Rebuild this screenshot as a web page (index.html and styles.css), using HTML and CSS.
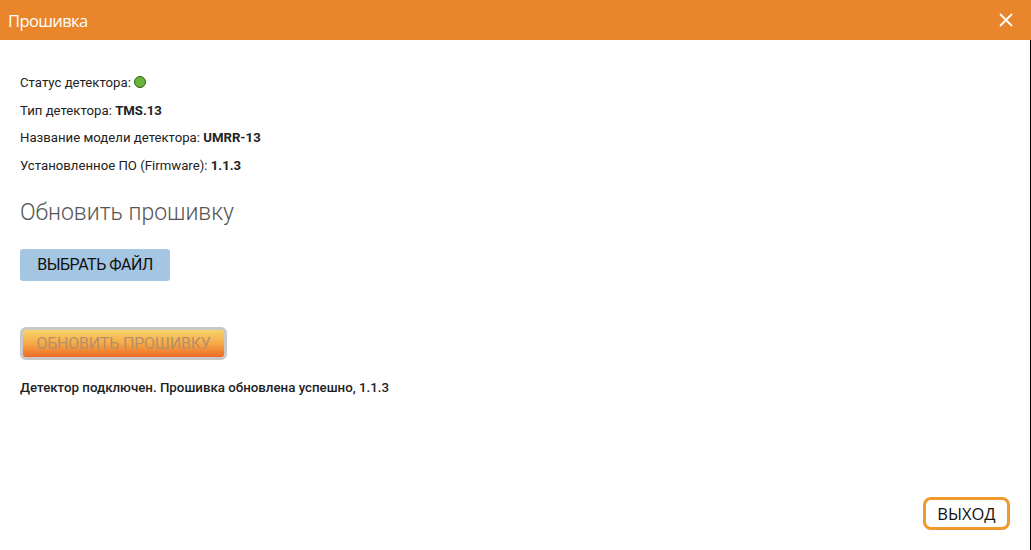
FILE: index.html
```html
<!DOCTYPE html>
<html lang="ru">
<head>
    <meta charset="UTF-8">
    <meta name="viewport" content="width=device-width, initial-scale=1.0">
    <title>Прошивка</title>
    <link rel="stylesheet" href="styles.css">
</head>
<body>
    <div class="dialog">
        <!-- Заголовок окна -->
        <div class="dialog-header">
            <span class="dialog-title">Прошивка</span>
            <button class="close-btn" title="Закрыть">
                <svg width="16" height="16" viewBox="0 0 16 16">
                    <path d="M2 2 L14 14 M14 2 L2 14" stroke="#fff" stroke-width="1.8" fill="none"/>
                </svg>
            </button>
        </div>

        <div class="dialog-body">
            <div class="info">
                <p>Статус детектора: <span class="status-dot"></span></p>
                <p>Тип детектора: <b>TMS.13</b></p>
                <p>Название модели детектора: <b>UMRR-13</b></p>
                <p>Установленное ПО (Firmware): <b>1.1.3</b></p>
            </div>

            <h2>Обновить прошивку</h2>

            <button class="btn-file">ВЫБРАТЬ ФАЙЛ</button>

            <button class="btn-update" disabled>ОБНОВИТЬ ПРОШИВКУ</button>

            <p class="result">Детектор подключен. Прошивка обновлена успешно, 1.1.3</p>

            <div class="footer">
                <button class="btn-exit">ВЫХОД</button>
            </div>
        </div>
    </div>
</body>
</html>
```

FILE: styles.css
```css
html, body {
    margin: 0;
    padding: 0;
    height: 100%;
    background-color: #fff;
}

body {
    font-family: 'Roboto', sans-serif;
    color: #222;
}

.dialog {
    display: flex;
    flex-direction: column;
    height: 550px;
}

.dialog-header {
    height: 40px;
    background-color: #e9852a;
    display: flex;
    align-items: center;
    justify-content: space-between;
    padding: 0 0 0 8px;
}

.dialog-title {
    font-family: 'Open Sans', sans-serif;
    font-size: 16.5px;
    color: #fff;
    letter-spacing: -0.6px;
}

.close-btn {
    background: none;
    border: none;
    padding: 0;
    margin-right: 17px;
    width: 16px;
    height: 16px;
    cursor: pointer;
    display: flex;
}

.dialog-body {
    flex: 1;
    display: flex;
    flex-direction: column;
    align-items: flex-start;
    padding: 29px 0 0 20px;
    border-right: 1px solid #000;
}

.info p {
    margin: 0;
    font-size: 13.2px;
    line-height: 27.7px;
    color: #222;
}

.info b {
    font-weight: 700;
}

.status-dot {
    display: inline-block;
    width: 10px;
    height: 10px;
    border-radius: 50%;
    background-color: #6bb43c;
    border: 1px solid #2f5e16;
    vertical-align: -1px;
}

h2 {
    font-weight: 300;
    font-size: 23px;
    color: #555;
    margin: 19px 0 0 0;
    line-height: 28px;
}

.btn-file {
    margin-top: 22px;
    width: 150px;
    height: 32px;
    background-color: #a5c6e2;
    border: none;
    border-radius: 3px;
    font-family: 'Roboto', sans-serif;
    font-size: 16px;
    color: #111;
    letter-spacing: -0.5px;
    padding: 0;
}

.btn-update {
    margin-top: 46px;
    width: 207px;
    height: 33px;
    border: 3px solid #c8c8c8;
    border-radius: 6px;
    background: linear-gradient(to bottom, #f8d36a 0%, #f5a947 50%, #ee6a26 100%);
    font-family: 'Roboto', sans-serif;
    font-size: 16px;
    color: #b59067;
    letter-spacing: -0.2px;
    padding: 0;
}

.result {
    margin: 20px 0 0 0;
    font-size: 13.3px;
    font-weight: 500;
    color: #222;
}

.footer {
    margin-top: auto;
    align-self: stretch;
    display: flex;
    justify-content: flex-end;
    padding: 0 20px 20px 0;
}

.btn-exit {
    width: 87px;
    height: 33px;
    border: 3px solid #f09a2e;
    border-radius: 8px;
    background-color: #fff;
    font-family: 'Open Sans', sans-serif;
    font-size: 16.5px;
    color: #111;
    padding: 0;
}
```
